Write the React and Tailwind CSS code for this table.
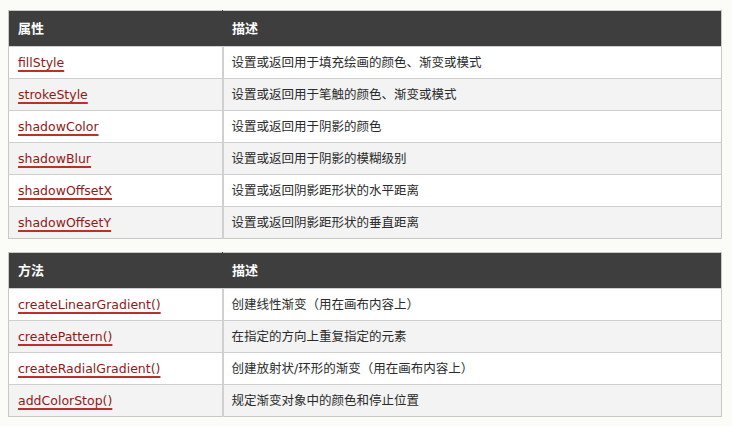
import React from "react";

const props = [
  ["fillStyle", "设置或返回用于填充绘画的颜色、渐变或模式"],
  ["strokeStyle", "设置或返回用于笔触的颜色、渐变或模式"],
  ["shadowColor", "设置或返回用于阴影的颜色"],
  ["shadowBlur", "设置或返回用于阴影的模糊级别"],
  ["shadowOffsetX", "设置或返回阴影距形状的水平距离"],
  ["shadowOffsetY", "设置或返回阴影距形状的垂直距离"],
];

const methods = [
  ["createLinearGradient()", "创建线性渐变（用在画布内容上）"],
  ["createPattern()", "在指定的方向上重复指定的元素"],
  ["createRadialGradient()", "创建放射状/环形的渐变（用在画布内容上）"],
  ["addColorStop()", "规定渐变对象中的颜色和停止位置"],
];

function RefTable({ title, rows }) {
  return (
    <table className="w-[714px] border-collapse table-fixed border border-[#c8c8c8]">
      <thead>
        <tr className="h-[36px] bg-[#3e3e3e] text-white text-[13px] font-bold text-left">
          <th className="w-[214px] px-[9px] border-r border-[#3e3e3e]">{title}</th>
          <th className="px-[9px]">描述</th>
        </tr>
      </thead>
      <tbody>
        {rows.map(([name, desc], i) => (
          <tr
            key={name}
            className={`h-[32px] border-t border-[#cfcfcf] ${i % 2 ? "bg-[#f3f3f3]" : "bg-white"}`}
          >
            <td className="px-[9px] border-r-2 border-[#d0d0d0]">
              <a
                href="#"
                className="text-[#8e1a16] underline decoration-[#b8322c] decoration-[1.5px] underline-offset-[3px]"
              >
                {name}
              </a>
            </td>
            <td className="pl-[8px] pr-[9px] text-[#2a2a2a]">{desc}</td>
          </tr>
        ))}
      </tbody>
    </table>
  );
}

export default function App() {
  return (
    <div
      className="w-[732px] h-[426px] bg-[#fbfbf7] pt-[10px] pl-[8px] flex flex-col gap-[13px] text-[12.5px] leading-[16px] overflow-hidden"
      style={{ fontFamily: '"DejaVu Sans", Verdana, "Noto Sans CJK SC", sans-serif' }}
    >
      <RefTable title="属性" rows={props} />
      <RefTable title="方法" rows={methods} />
    </div>
  );
}
